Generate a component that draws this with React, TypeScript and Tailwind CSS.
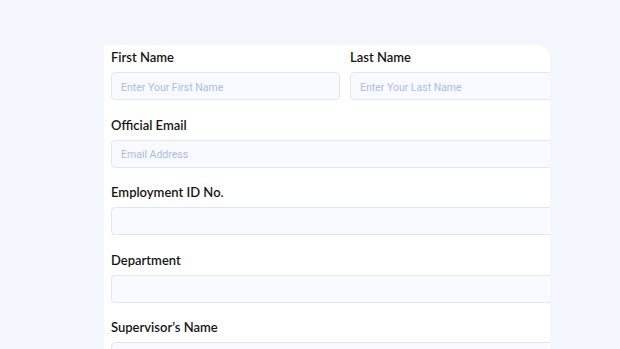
import React from "react";

const FIELDS = [
  { label: "Official Email", placeholder: "Email Address" },
  { label: "Employment ID No.", placeholder: "" },
  { label: "Department", placeholder: "" },
  { label: "Supervisor’s Name", placeholder: "" },
];

function Field({ label, placeholder }: { label: string; placeholder: string }) {
  return (
    <div className="flex flex-col gap-[6px]">
      <label className="h-[18px] text-[13px] leading-[18px] font-semibold text-[#161616] [font-family:Lato,'Noto_Sans',sans-serif]">
        {label}
      </label>
      <input
        placeholder={placeholder}
        className="h-[28px] w-full rounded-[4px] border border-[#dde7f5] bg-[#f8faff] px-[9px] pt-[2px] text-[10.5px] outline-none placeholder:text-[#a9bde9] [font-family:Roboto,sans-serif]"
      />
    </div>
  );
}

export default function App() {
  return (
    <div className="h-[349px] w-[620px] overflow-hidden bg-[#f3f6fd]">
      <div className="ml-[104px] mt-[45px] h-[400px] w-[446px] overflow-hidden rounded-tr-[14px] bg-white pl-[7px] pt-[3px]">
        <div className="flex w-[468px] flex-col gap-[15.5px]">
          <div className="grid grid-cols-2 gap-[10px]">
            <Field label="First Name" placeholder="Enter Your First Name" />
            <Field label="Last Name" placeholder="Enter Your Last Name" />
          </div>
          {FIELDS.map((f) => (
            <Field key={f.label} label={f.label} placeholder={f.placeholder} />
          ))}
        </div>
      </div>
    </div>
  );
}
